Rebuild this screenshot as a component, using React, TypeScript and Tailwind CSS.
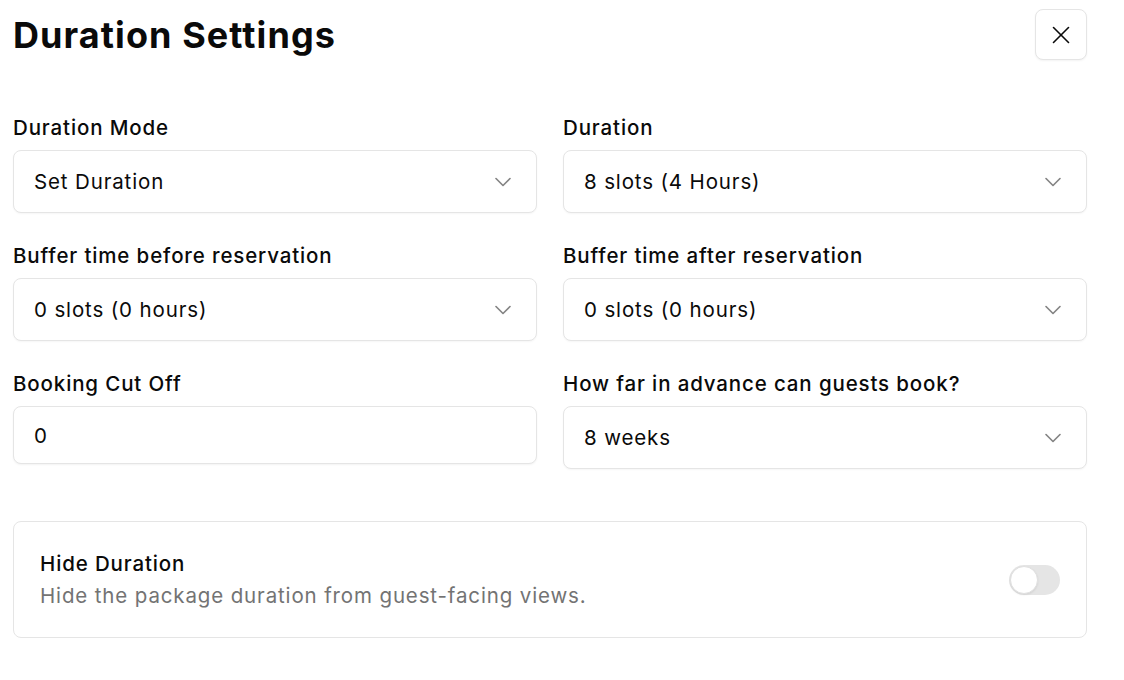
import React from "react";
import { ChevronDown, X } from "lucide-react";

const font = { fontFamily: "Inter, 'Noto Sans', sans-serif" };

function Label({ children }: { children: React.ReactNode }) {
  return <div className="text-[20.5px] leading-[28px] font-medium text-[#0a0a0a] mb-2 tracking-[0.042em]">{children}</div>;
}

function SelectBox({ value }: { value: string }) {
  return (
    <div className="h-[63px] rounded-[8px] border border-[#e5e5e5] bg-white flex items-center justify-between pl-5 pr-[19px] shadow-[0_1px_2px_rgba(0,0,0,0.04)]">
      <span className="text-[20.5px] leading-[28px] pt-[1px] text-[#0a0a0a] tracking-[0.042em]">{value}</span>
      <ChevronDown size={28} strokeWidth={1.4} className="text-[#0a0a0a] opacity-50" />
    </div>
  );
}

function InputBox({ value }: { value: string }) {
  return (
    <div className="h-[58px] rounded-[8px] border border-[#e5e5e5] bg-white flex items-center pl-5 shadow-[0_1px_2px_rgba(0,0,0,0.05)]">
      <span className="text-[20.5px] leading-[28px] pt-[1px] text-[#0a0a0a] tracking-[0.042em]">{value}</span>
    </div>
  );
}

export default function App() {
  return (
    <div className="w-[1124px] h-[680px] bg-white" style={font}>
      <div className="pl-[13px] pr-[37px] pt-[9px]">
        <div className="flex items-center justify-between h-[51px]">
          <h1 className="text-[36px] leading-[40px] font-bold text-[#0a0a0a] tracking-[0.03em]">Duration Settings</h1>
          <button className="w-[52px] h-[51px] rounded-[8px] border border-[#e5e5e5] bg-white flex items-center justify-center shadow-[0_1px_2px_rgba(0,0,0,0.05)]">
            <X size={30} strokeWidth={1.3} className="text-[#0a0a0a]" />
          </button>
        </div>
        <div className="grid grid-cols-2 gap-x-[26px] gap-y-[29px] mt-[54px]">
          <div>
            <Label>Duration Mode</Label>
            <SelectBox value="Set Duration" />
          </div>
          <div>
            <Label>Duration</Label>
            <SelectBox value="8 slots (4 Hours)" />
          </div>
          <div>
            <Label>Buffer time before reservation</Label>
            <SelectBox value="0 slots (0 hours)" />
          </div>
          <div>
            <Label>Buffer time after reservation</Label>
            <SelectBox value="0 slots (0 hours)" />
          </div>
          <div>
            <Label>Booking Cut Off</Label>
            <InputBox value="0" />
          </div>
          <div>
            <Label>How far in advance can guests book?</Label>
            <SelectBox value="8 weeks" />
          </div>
        </div>
        <div className="mt-[52px] rounded-[8px] border border-[#e5e5e5] flex items-center justify-between pl-[26px] pr-[26px] h-[117px]">
          <div>
            <div className="text-[20.5px] leading-[28px] font-medium text-[#0a0a0a] tracking-[0.042em]">Hide Duration</div>
            <div className="text-[20.5px] leading-[28px] text-[#737373] mt-[4px] tracking-[0.042em]">Hide the package duration from guest-facing views.</div>
          </div>
          <div className="w-[51px] h-[30px] rounded-full bg-[#e5e5e5] flex items-center p-[1px]">
            <div className="w-[28px] h-[28px] rounded-full bg-white border border-[#e0e0e0] shadow-[0_1px_2px_rgba(0,0,0,0.08)]" />
          </div>
        </div>
      </div>
    </div>
  );
}
